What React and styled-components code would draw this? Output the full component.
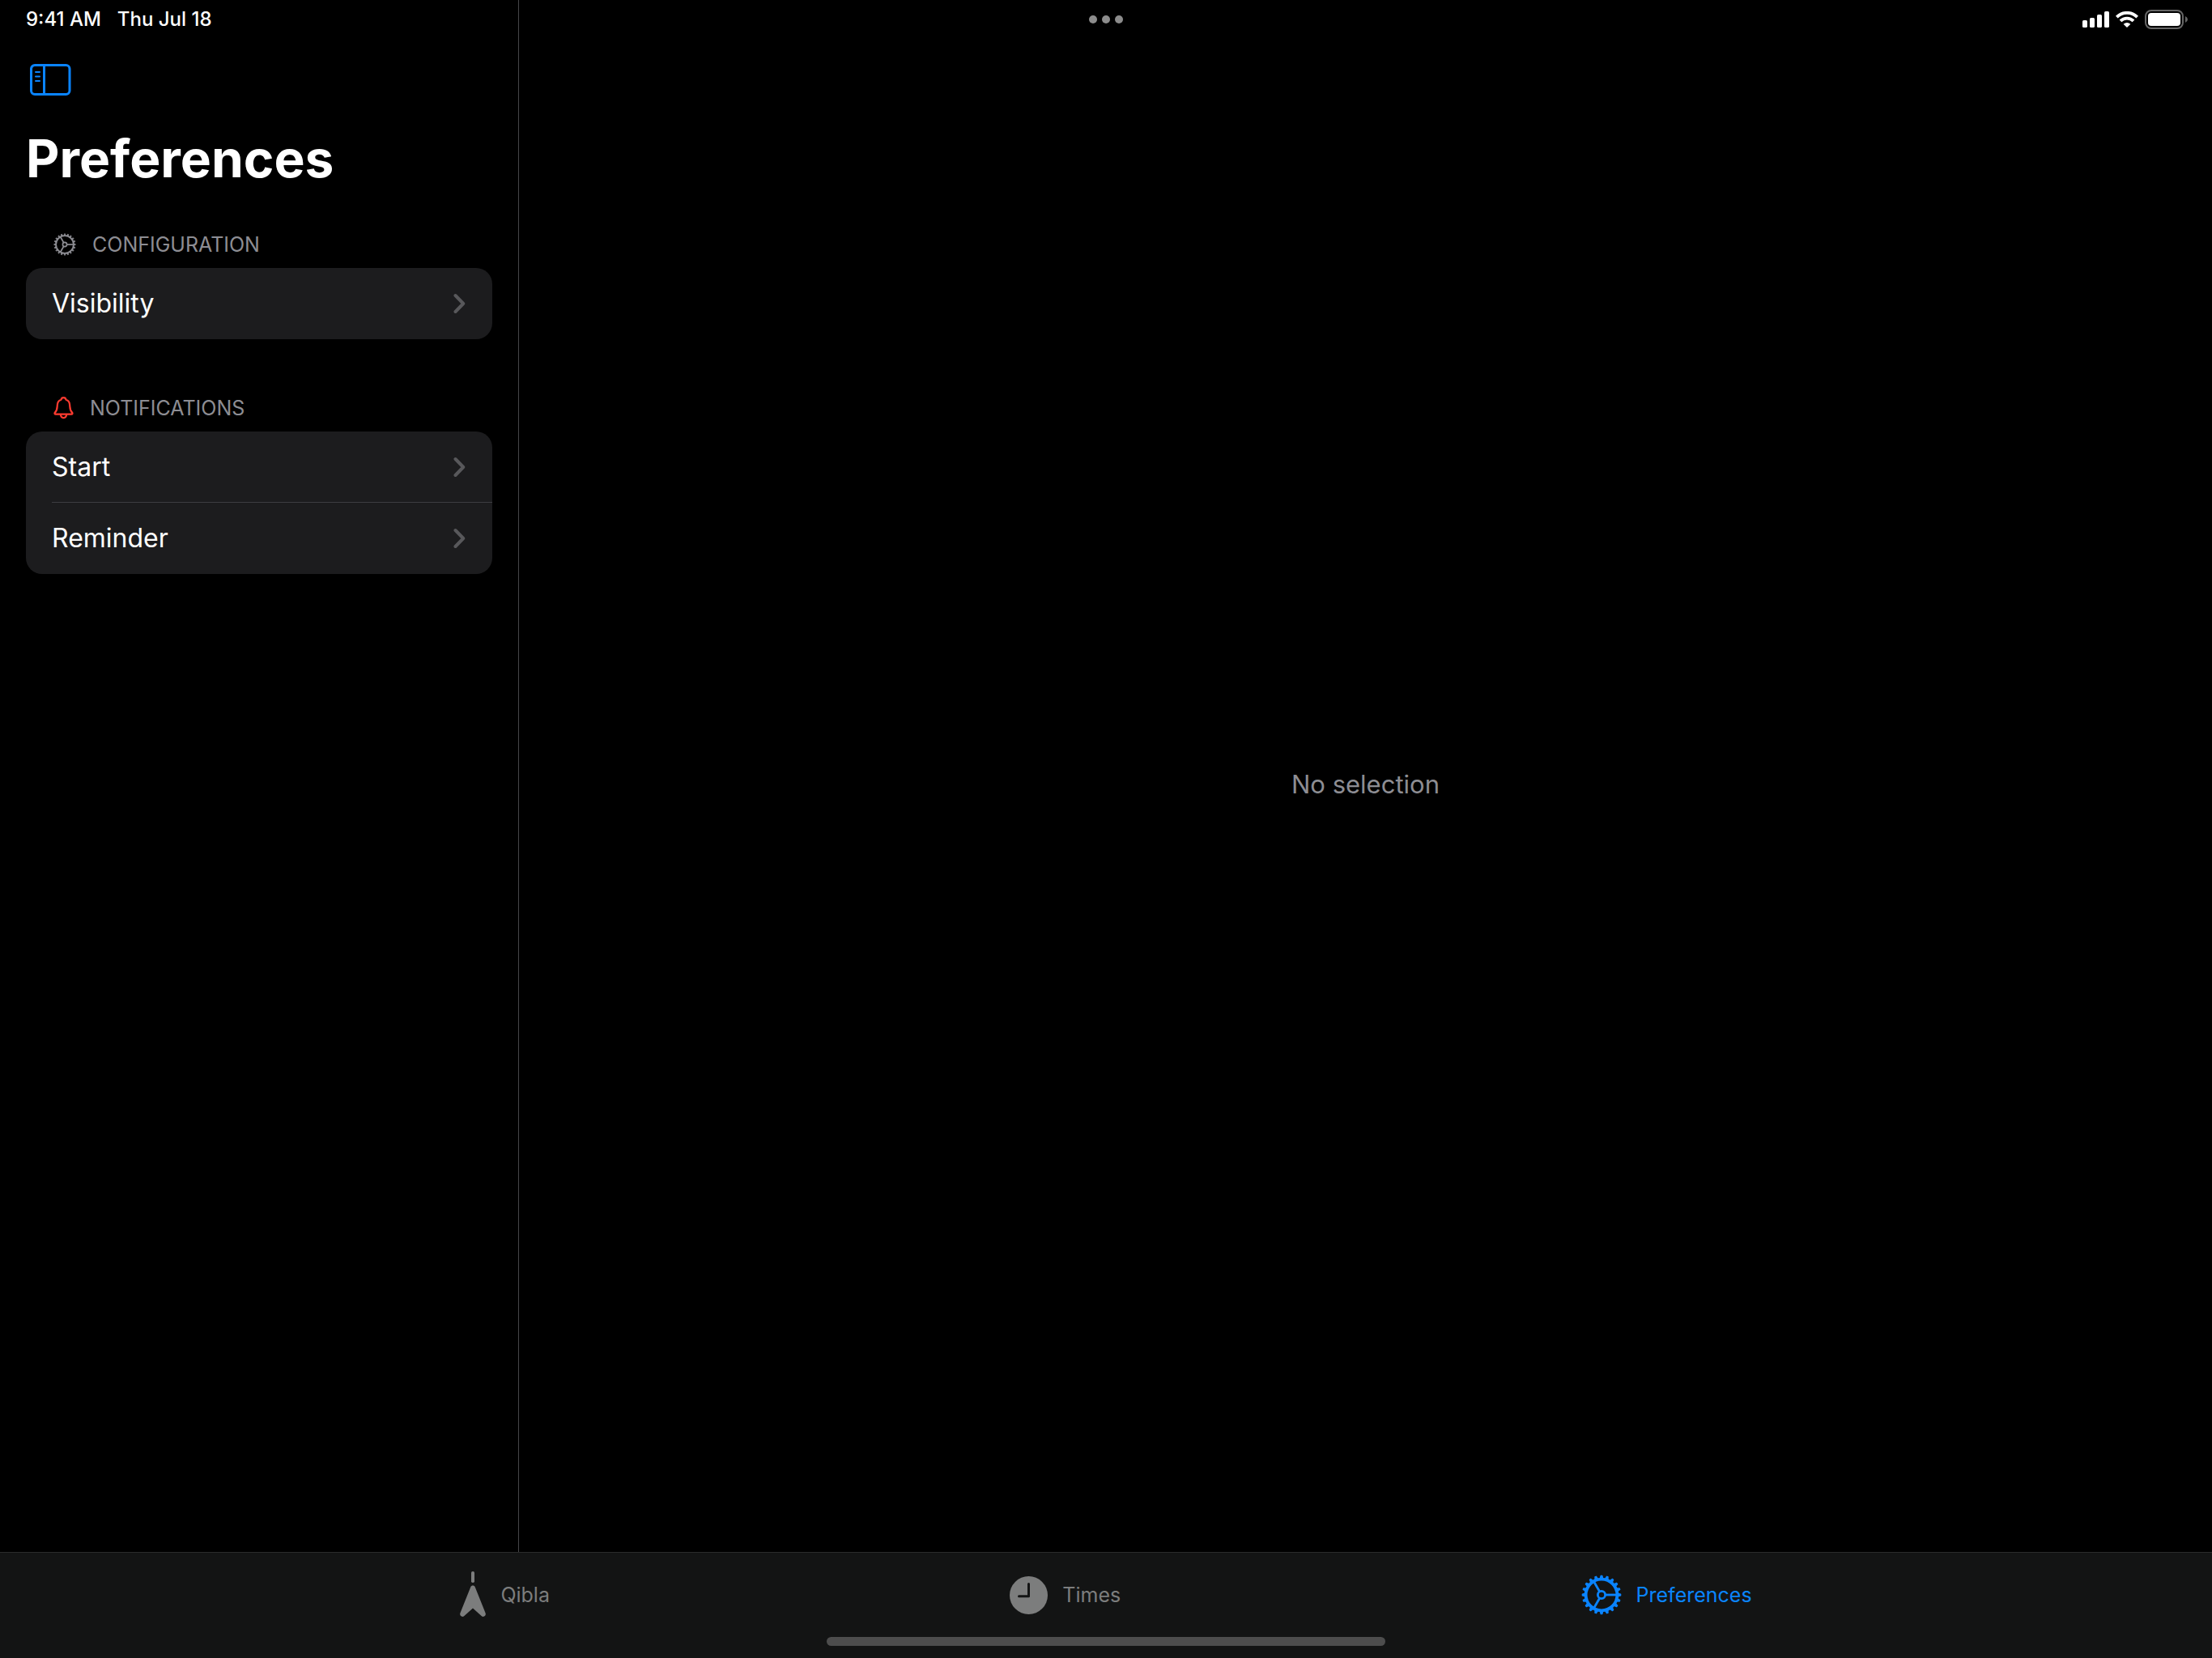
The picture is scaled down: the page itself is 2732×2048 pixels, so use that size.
import React from 'react';
import styled, { createGlobalStyle } from 'styled-components';

const GlobalStyle = createGlobalStyle`
  *, *::before, *::after { box-sizing: border-box; }
  html { background: #000; }
  body {
    margin: 0;
    background: #000;
    color: #fff;
    font-family: Inter, "Liberation Sans", sans-serif;
    -webkit-font-smoothing: antialiased;
  }
`;

const Shell = styled.div`
  display: grid;
  grid-template-columns: minmax(0, 1fr);
  grid-template-rows: 48px minmax(0, 1fr) auto;
  min-height: 100vh;
`;

const StatusBar = styled.header`
  grid-area: 1 / 1 / 2 / 2;
  z-index: 1;
  display: grid;
  grid-template-columns: 1fr auto 1fr;
  align-items: center;
  padding: 0 30px;
  font-size: 24px;
  font-weight: 500;
  line-height: 48px;
`;

const StatusGroup = styled.div`
  display: flex;
  align-items: center;
  justify-content: ${(p) => (p.$end ? 'flex-end' : 'flex-start')};
  gap: ${(p) => (p.$end ? '8px' : '20px')};
  padding-left: 2px;
`;

const MultitaskButton = styled.button`
  display: flex;
  gap: 6px;
  padding: 0;
  border: 0;
  background: none;
`;

const Dot = styled.span`
  width: 10px;
  height: 10px;
  border-radius: 50%;
  background: #8c8c8c;
`;

const Split = styled.div`
  grid-area: 1 / 1 / 3 / 2;
  display: flex;
`;

const Sidebar = styled.nav`
  flex: none;
  width: 641px;
  padding: 76px 32px 32px;
  border-right: 1px solid #464649;
`;

const SidebarToggle = styled.button`
  display: flex;
  margin: 0;
  padding: 0 4px;
  border: 0;
  background: none;
  color: #0a84ff;
`;

const Title = styled.h1`
  margin: 34px 0 0;
  font-size: 64px;
  font-weight: 700;
  line-height: 84px;
`;

const Section = styled.section`
  margin-top: ${(p) => (p.$first ? '43px' : '64px')};
`;

const SectionTitle = styled.h2`
  display: flex;
  align-items: center;
  gap: 20px;
  height: 50px;
  margin: 0;
  padding: 0 32px 8px 34px;
  color: #8d8d93;
  font-size: 25px;
  font-weight: 400;
  line-height: 32px;
  text-transform: uppercase;
`;

const Card = styled.ul`
  margin: 0;
  padding: 0;
  list-style: none;
  border-radius: 20px;
  background: #1c1c1e;
`;

const Item = styled.li`
  padding-left: 32px;
`;

const RowLink = styled.a`
  display: flex;
  align-items: center;
  justify-content: space-between;
  height: 88px;
  padding-right: 32px;
  border-bottom: ${(p) => (p.$last ? '0' : '1px solid #3d3d41')};
  color: #fff;
  font-size: 32px;
  line-height: 44px;
  text-decoration: none;
`;

const Detail = styled.main`
  flex: 1;
  display: flex;
  align-items: center;
  justify-content: center;
  padding-top: 20px;
`;

const EmptyText = styled.p`
  margin: 0;
  color: #8d8d93;
  font-size: 31px;
  line-height: 44px;
`;

const TabBar = styled.footer`
  grid-area: 3 / 1 / 4 / 2;
  border-top: 1px solid #2a2b2b;
  background: #131414;
`;

const Tabs = styled.nav`
  display: flex;
  justify-content: space-evenly;
  height: 104px;
`;

const Tab = styled.a`
  display: flex;
  align-items: center;
  gap: 18px;
  color: ${(p) => (p.$active ? '#0a84ff' : '#7c7d7d')};
  font-size: 25px;
  line-height: 32px;
  text-decoration: none;
`;

const HomeIndicator = styled.div`
  width: 690px;
  height: 11px;
  margin: 0 auto 15px;
  border-radius: 6px;
  background: #4d4d4d;
`;

const SignalIcon = () => (
  <svg width="33" height="20" viewBox="0 0 33 20" fill="#fff" aria-hidden="true">
    <rect x="0" y="11" width="6" height="9" rx="1.6" />
    <rect x="9" y="8" width="6" height="12" rx="1.6" />
    <rect x="18" y="4" width="6" height="16" rx="1.6" />
    <rect x="27" y="0" width="6" height="20" rx="1.6" />
  </svg>
);

const WifiIcon = () => (
  <svg width="28" height="20" viewBox="0 0 28 20" aria-hidden="true">
    <g fill="none" stroke="#fff" strokeWidth="3.9">
      <path d="M1.3 7.1 A18 18 0 0 1 26.7 7.1" />
      <path d="M6 11.9 A11.5 11.5 0 0 1 22 11.9" />
    </g>
    <path d="M14 20 L9.6 15.7 Q14 12.2 18.4 15.7 Z" fill="#fff" />
  </svg>
);

const BatteryIcon = () => (
  <svg width="53" height="24" viewBox="0 0 53 24" aria-hidden="true">
    <rect x="1" y="1" width="46" height="22" rx="7" fill="none" stroke="#666" strokeWidth="2" />
    <rect x="4" y="4" width="40" height="16" rx="4" fill="#fff" />
    <path d="M50 8 Q53 9.5 53 12 Q53 14.5 50 16 Z" fill="#666" />
  </svg>
);

const SidebarIcon = () => (
  <svg width="52" height="44" viewBox="0 0 52 44" fill="none" stroke="currentColor" aria-hidden="true">
    <rect x="2.5" y="4.5" width="47.5" height="36" rx="4.5" strokeWidth="3" />
    <path d="M18.5 4.5 V40.5" strokeWidth="3" />
    <path d="M8 13 H13 M8 18.5 H13 M8 24 H13" strokeWidth="2" strokeLinecap="round" />
  </svg>
);

const ChevronIcon = () => (
  <svg width="16" height="26" viewBox="0 0 16 26" fill="none" stroke="#58585b" strokeWidth="4" strokeLinecap="round" strokeLinejoin="round" aria-hidden="true">
    <path d="M2.5 3 L12.2 13 L2.5 23" />
  </svg>
);

const TEETH = Array.from({ length: 20 }, (_, i) => i * 18);

const GearIcon = ({ size, ring = 3.8, spoke = 2.8 }) => (
  <svg width={size} height={size} viewBox="0 0 50 50" fill="none" stroke="currentColor" aria-hidden="true">
    <circle cx="25" cy="25" r="19.4" strokeWidth={ring} />
    <circle cx="25" cy="25" r="4.6" strokeWidth={spoke} />
    {[0, 120, 240].map((a) => (
      <path key={a} d="M29.6 25 H44" strokeWidth={spoke} transform={`rotate(${a} 25 25)`} />
    ))}
    {TEETH.map((a) => (
      <path key={a} d="M45 23.3 L48.6 24.2 V25.8 L45 26.7 Z" fill="currentColor" strokeWidth="1.4" strokeLinejoin="round" transform={`rotate(${a} 25 25)`} />
    ))}
  </svg>
);

const BellIcon = () => (
  <svg width="25" height="28" viewBox="0 0 24 28" fill="none" stroke="#ff3b30" strokeWidth="2.2" strokeLinejoin="round" aria-hidden="true">
    <path d="M2 21.6 C0.6 21.6 0.8 20.2 1.6 19.4 C4.4 16.6 4 13.4 4.4 9.8 C4.7 6.4 6.4 4.6 8.9 3.8 C9.3 2.2 10.5 1.2 12 1.2 C13.5 1.2 14.7 2.2 15.1 3.8 C17.6 4.6 19.3 6.4 19.6 9.8 C20 13.4 19.6 16.6 22.4 19.4 C23.2 20.2 23.4 21.6 22 21.6 Z" />
    <path d="M8.4 21.8 C8.6 27.6 15.4 27.6 15.6 21.8" />
  </svg>
);

const QiblaIcon = () => (
  <svg width="32" height="58" viewBox="0 0 32 58" fill="currentColor" aria-hidden="true">
    <rect x="14" y="0" width="4" height="14" rx="1.8" />
    <path d="M13.2 19.4 C14.2 16.9 17.8 16.9 18.8 19.4 L31.6 51.6 C32.8 54.8 29.2 57.4 26.6 55.1 L16 45.6 L5.4 55.1 C2.8 57.4 -0.8 54.8 0.4 51.6 Z" />
  </svg>
);

const ClockIcon = () => (
  <svg width="47" height="47" viewBox="0 0 47 47" aria-hidden="true">
    <circle cx="23.5" cy="23.5" r="23.5" fill="currentColor" />
    <path d="M23.5 9.5 V24.8 H11.5" fill="none" stroke="#131414" strokeWidth="3" strokeLinecap="round" strokeLinejoin="round" />
  </svg>
);

const sections = [
  { id: 'configuration', title: 'Configuration', icon: <GearIcon size={28} ring={3.2} spoke={3} />, items: ['Visibility'] },
  { id: 'notifications', title: 'Notifications', icon: <BellIcon />, items: ['Start', 'Reminder'] },
];

const tabs = [
  { label: 'Qibla', icon: <QiblaIcon /> },
  { label: 'Times', icon: <ClockIcon /> },
  { label: 'Preferences', icon: <GearIcon size={50} />, active: true },
];

export default function App() {
  return (
    <Shell>
      <GlobalStyle />
      <StatusBar>
        <StatusGroup>
          <span>9:41 AM</span>
          <span>Thu Jul 18</span>
        </StatusGroup>
        <MultitaskButton type="button" aria-label="Multitasking">
          <Dot />
          <Dot />
          <Dot />
        </MultitaskButton>
        <StatusGroup $end>
          <SignalIcon />
          <WifiIcon />
          <BatteryIcon />
        </StatusGroup>
      </StatusBar>

      <Split>
        <Sidebar>
          <SidebarToggle type="button" aria-label="Toggle sidebar">
            <SidebarIcon />
          </SidebarToggle>
          <Title>Preferences</Title>
          {sections.map((section, index) => (
            <Section key={section.id} $first={index === 0}>
              <SectionTitle>
                {section.icon}
                {section.title}
              </SectionTitle>
              <Card>
                {section.items.map((item, i) => (
                  <Item key={item}>
                    <RowLink href={`#${item.toLowerCase()}`} $last={i === section.items.length - 1}>
                      {item}
                      <ChevronIcon />
                    </RowLink>
                  </Item>
                ))}
              </Card>
            </Section>
          ))}
        </Sidebar>
        <Detail>
          <EmptyText>No selection</EmptyText>
        </Detail>
      </Split>

      <TabBar>
        <Tabs>
          {tabs.map((tab) => (
            <Tab key={tab.label} href={`#${tab.label.toLowerCase()}`} $active={tab.active}>
              {tab.icon}
              {tab.label}
            </Tab>
          ))}
        </Tabs>
        <HomeIndicator />
      </TabBar>
    </Shell>
  );
}
